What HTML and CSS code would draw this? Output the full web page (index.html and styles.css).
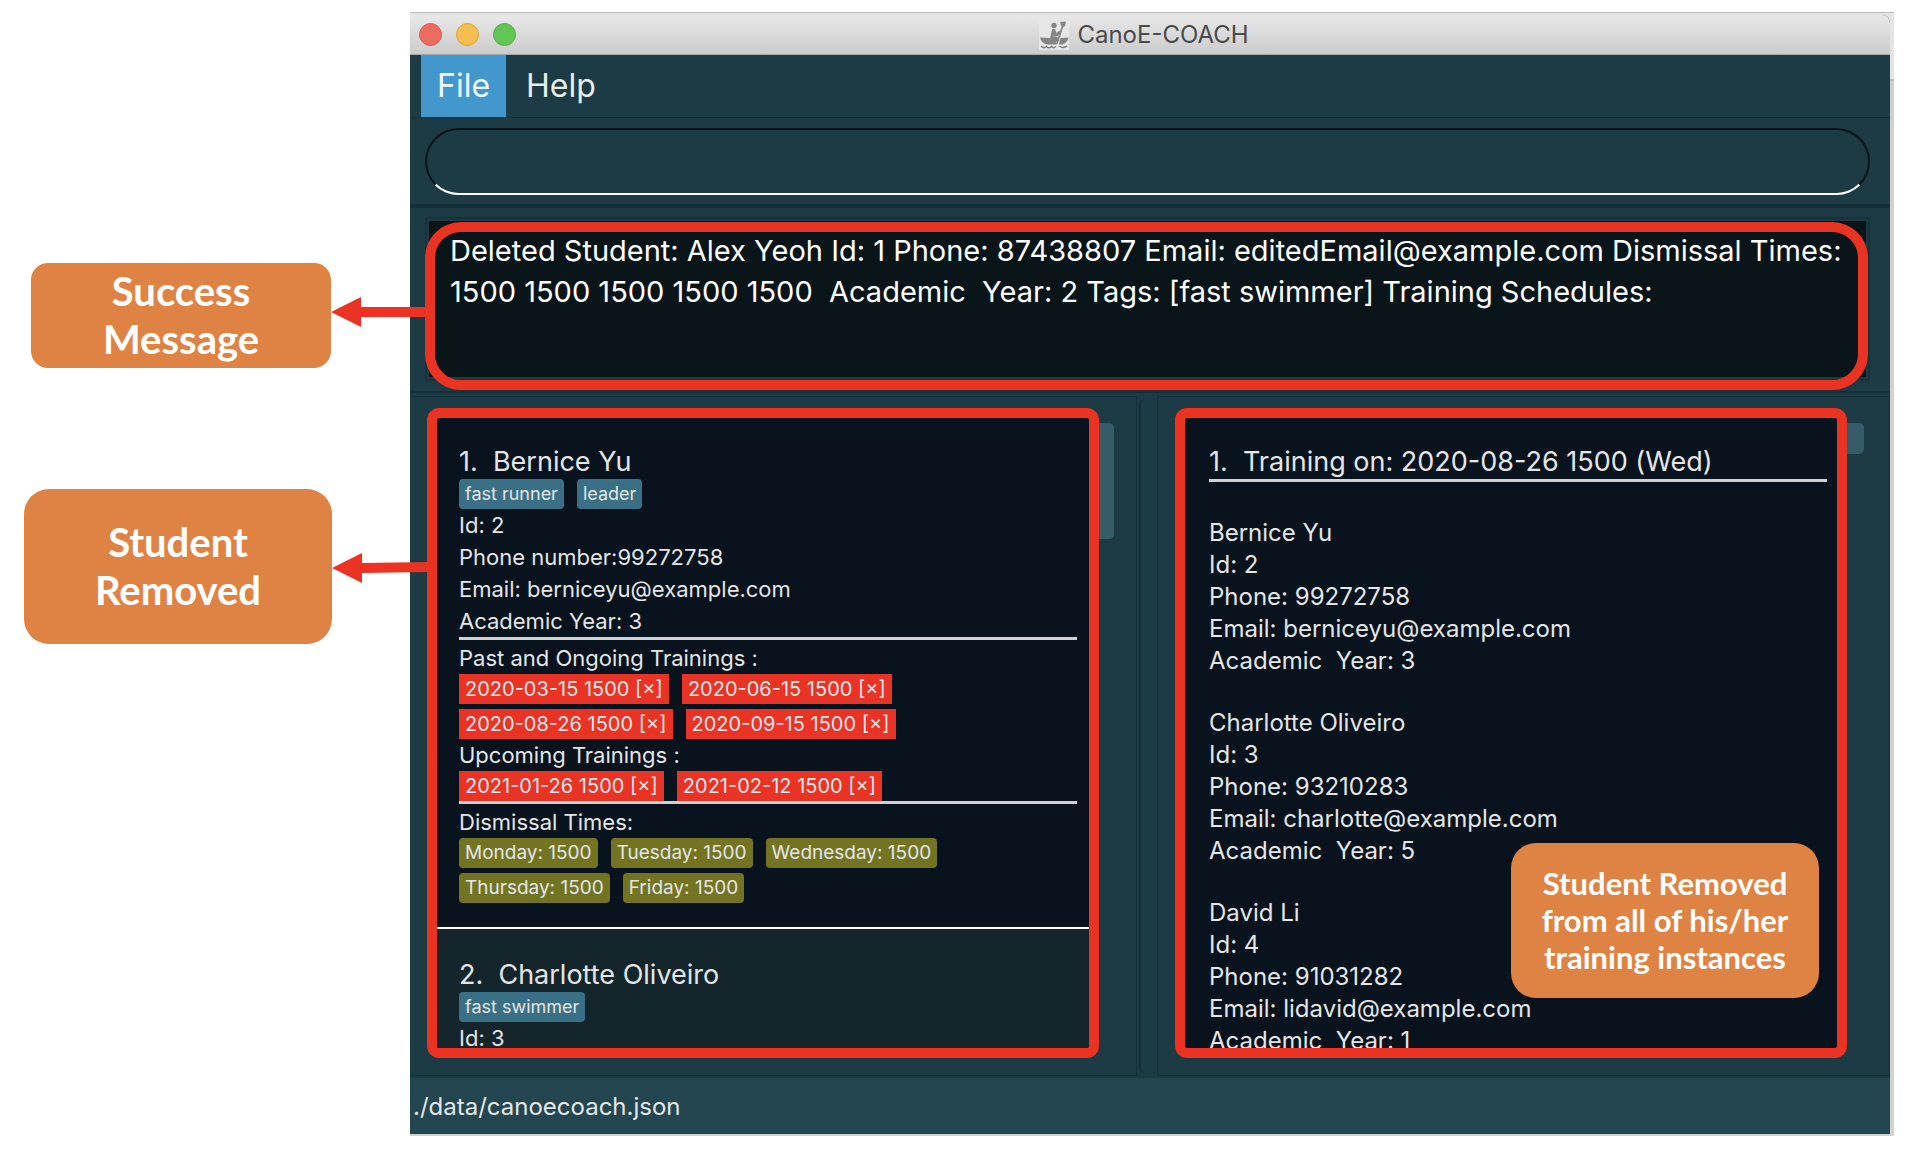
FILE: index.html
```
<!DOCTYPE html>
<html lang="en">
<head>
<meta charset="utf-8">
<title>CanoE-COACH</title>
<link rel="stylesheet" href="styles.css">
</head>
<body>
<div class="page">
  <aside class="notes">
    <div class="callout callout-success">Success<br>Message
      <svg class="arrow" viewBox="0 0 96 30" aria-hidden="true"><path d="M0 15 30 0v10h66v10H30v10z"/></svg>
    </div>
    <div class="callout callout-removed">Student<br>Removed
      <svg class="arrow" viewBox="0 0 96 30" aria-hidden="true"><path d="M0 15 30 0v10l66-1v10l-66 1v10z"/></svg>
    </div>
  </aside>

  <div class="desktop">
    <main class="window">
      <header class="titlebar">
        <div class="lights">
          <button class="light light-close" aria-label="Close"></button>
          <button class="light light-min" aria-label="Minimise"></button>
          <button class="light light-max" aria-label="Zoom"></button>
        </div>
        <div class="title">
          <svg class="logo" viewBox="0 0 30 30" aria-hidden="true">
            <rect width="30" height="30" fill="#e6e6e6"/>
            <g fill="#858585">
              <circle cx="15" cy="5.500" r="2.700"/>
              <path d="M13 9.500q2-1.500 3.500.5l1 4 4-1 .5 2-6 1.500-1.500-1v1l5 .5 1 4H10.500z"/>
              <path d="M1 17.500 10 18q5 1 8 .5l-1 6H8Q2 23 1 17.500z"/>
              <path d="M21.500 18 29.500 17.500Q28.500 23 23 24.500h-3z"/>
              <path d="M21 2 27 1.500 26 6l-2 1.500-5.500 17-1.500-.5L22.500 7z"/>
              <path d="m17 13 4-2.500 2 .5-1 2-4 2.500z"/>
            </g>
            <path d="M2 26q3 3 5.500.5 2.500 2.500 5 0 2 2.500 4.500 0M20.500 26q3 3 7.500 0" fill="none" stroke="#858585" stroke-width="1.600"/>
          </svg>
          <span>CanoE-COACH</span>
        </div>
      </header>

      <nav class="menubar">
        <button class="menu menu-active">File</button>
        <button class="menu">Help</button>
      </nav>

      <form class="command">
        <input class="command-input" type="text" aria-label="Command">
      </form>

      <section class="result">
        <div class="result-frame">
          <p class="result-text">Deleted Student: Alex Yeoh Id: 1 Phone: 87438807 Email: editedEmail@example.com Dismissal Times: 1500 1500 1500 1500 1500  Academic  Year: 2 Tags: [fast swimmer] Training Schedules:</p>
        </div>
      </section>

      <div class="panes">
        <section class="pane">
          <div class="list-wrap">
            <ul class="list">
              <li class="student">
                <h2 class="name">1.&nbsp; Bernice Yu</h2>
                <div class="chips"><span class="chip">fast runner</span><span class="chip">leader</span></div>
                <p>Id: 2</p>
                <p>Phone number:99272758</p>
                <p>Email: berniceyu@example.com</p>
                <p>Academic Year: 3</p>
                <hr class="rule">
                <p>Past and Ongoing Trainings :</p>
                <div class="chips">
                  <span class="chip chip-missed">2020-03-15 1500 [×]</span><span class="chip chip-missed">2020-06-15 1500 [×]</span>
                </div>
                <div class="chips chips-next">
                  <span class="chip chip-missed">2020-08-26 1500 [×]</span><span class="chip chip-missed">2020-09-15 1500 [×]</span>
                </div>
                <p>Upcoming Trainings :</p>
                <div class="chips">
                  <span class="chip chip-missed">2021-01-26 1500 [×]</span><span class="chip chip-missed">2021-02-12 1500 [×]</span>
                </div>
                <hr class="rule">
                <p>Dismissal Times:</p>
                <div class="chips">
                  <span class="chip chip-time">Monday: 1500</span><span class="chip chip-time">Tuesday: 1500</span><span class="chip chip-time">Wednesday: 1500</span>
                </div>
                <div class="chips chips-next">
                  <span class="chip chip-time">Thursday: 1500</span><span class="chip chip-time">Friday: 1500</span>
                </div>
              </li>
              <li class="student student-alt">
                <h2 class="name">2.&nbsp; Charlotte Oliveiro</h2>
                <div class="chips"><span class="chip">fast swimmer</span></div>
                <p>Id: 3</p>
              </li>
            </ul>
            <div class="thumb thumb-students"></div>
          </div>
        </section>
        <div class="divider"></div>
        <section class="pane pane-trainings">
          <div class="list-wrap">
            <ul class="list">
              <li class="training">
                <h2 class="name">1.&nbsp; Training on: 2020-08-26 1500 (Wed)</h2>
                <hr class="rule">
                <div class="attendees">
                  <div>
                    <p>Bernice Yu</p>
                    <p>Id: 2</p>
                    <p>Phone: 99272758</p>
                    <p>Email: berniceyu@example.com</p>
                    <p>Academic&nbsp; Year: 3</p>
                  </div>
                  <div>
                    <p>Charlotte Oliveiro</p>
                    <p>Id: 3</p>
                    <p>Phone: 93210283</p>
                    <p>Email: charlotte@example.com</p>
                    <p>Academic&nbsp; Year: 5</p>
                  </div>
                  <div>
                    <p>David Li</p>
                    <p>Id: 4</p>
                    <p>Phone: 91031282</p>
                    <p>Email: lidavid@example.com</p>
                    <p>Academic&nbsp; Year: 1</p>
                  </div>
                </div>
              </li>
            </ul>
            <div class="thumb thumb-trainings"></div>
            <div class="callout callout-instances">Student Removed<br>from all of his/her<br>training instances</div>
          </div>
        </section>
      </div>

      <footer class="status">./data/canoecoach.json</footer>
    </main>
  </div>
</div>
</body>
</html>
```
FILE: styles.css
```
:root {
  --red: #ea3323;
  --orange: #df8344;
  --teal: #1c3b44;
  --teal-dark: #142f37;
  --black: #09131d;
}

* { box-sizing: border-box; }

body {
  margin: 0;
  background: #fff;
  font-family: Inter, "Liberation Sans", sans-serif;
}

h2, p, ul { margin: 0; padding: 0; font-weight: 400; }
button { border: 0; padding: 0; font: inherit; color: inherit; background: none; }

.page {
  display: grid;
  grid-template-columns: 410px 1fr;
  height: 100vh;
  min-height: 700px;
  padding: 12px 16px 20px 0;
}

/* Annotations */
.notes { padding-top: 251px; }

.callout {
  position: relative;
  background: var(--orange);
  color: #fff;
  font-family: Lato, "Liberation Sans", sans-serif;
  font-weight: 700;
  font-size: 40px;
  line-height: 48px;
  text-align: center;
  border-radius: 25px;
}

.callout-success {
  width: 300px;
  height: 105px;
  margin-left: 31px;
  padding-top: 4px;
  border-radius: 17px;
}

.callout-removed {
  width: 308px;
  height: 155px;
  margin: 121px 0 0 24px;
  padding-top: 29px;
}

.callout-instances {
  position: absolute;
  right: 28px;
  bottom: 60px;
  width: 308px;
  height: 155px;
  padding-top: 22px;
  font-size: 31px;
  line-height: 37px;
}

.arrow {
  position: absolute;
  left: 100%;
  top: 50%;
  width: 96px;
  height: 30px;
  margin-top: -19px;
  fill: var(--red);
  z-index: 1;
}

.callout-removed .arrow { margin-top: -14px; }

/* Window */
.desktop {
  display: flex;
  min-height: 0;
  padding: 2px 4px 2px 0;
  background: linear-gradient(#e4e4e4 66px, #bdbdbd 66px 68px, #cfcfcf 68px 107px, #d3d1d0 107px);
  border-top: 1px solid #bcbcbc;
}

.window {
  flex: 1;
  display: flex;
  flex-direction: column;
  min-width: 0;
  background: var(--teal);
  border-radius: 0 8px 0 0;
  overflow: hidden;
}

.titlebar {
  display: grid;
  grid-template-columns: 1fr auto 1fr;
  align-items: center;
  height: 40px;
  background: linear-gradient(#e8e8e8, #cbcbcb);
  border-bottom: 1px solid #a9a9a9;
}

.lights { display: flex; gap: 14px; padding-left: 9px; }
.light { width: 23px; height: 23px; border-radius: 50%; border: 1px solid #e05b50; background: #ed6b60; }
.light-min { background: #f5be50; border-color: #dfa23c; }
.light-max { background: #62c655; border-color: #50ac42; }

.title {
  display: flex;
  align-items: center;
  gap: 8px;
  padding-right: 12px;
  font-size: 24px;
  line-height: 30px;
  color: #4a4a4a;
}

.logo { width: 30px; height: 30px; }

.menubar {
  display: flex;
  height: 63px;
  padding-left: 11px;
  border-bottom: 1px solid var(--teal-dark);
}

.menu { padding: 0 20px 2px; font-size: 32px; color: #eaeef0; }
.menu-active { padding: 0 16px 2px; background: #4297cc; color: #eef8ff; }

.command {
  padding: 10px 20px 9px 15px;
  border-bottom: 4px solid var(--teal-dark);
}

.command-input {
  display: block;
  width: 100%;
  height: 67px;
  padding: 0 30px;
  border: 2px solid #09141a;
  border-bottom-color: #fff;
  border-radius: 34px;
  background: transparent;
  color: #fff;
  font: inherit;
  font-size: 29px;
  outline: 0;
}

.result {
  padding: 9px 20px 10px 15px;
  border-bottom: 2px solid var(--teal-dark);
}

.result-frame {
  position: relative;
  padding: 2px;
  border: 2px solid #17323b;
}

.result-frame::after {
  content: "";
  position: absolute;
  inset: 3px 0 -11px -2px;
  border: 10px solid var(--red);
  border-radius: 36px;
}

.result-text {
  height: 156px;
  padding: 9px 8px 0 21px;
  background: #0a151a;
  color: #fff;
  font-size: 29px;
  line-height: 41px;
  white-space: pre-wrap;
}

/* Lists */
.panes {
  flex: 1;
  display: grid;
  grid-template-columns: 727fr 20px 733fr;
  min-height: 0;
  padding: 3px 0 2px;
}

.pane {
  display: flex;
  min-height: 0;
  min-width: 0;
  padding: 11px 37px 17px 17px;
  border: 1px solid var(--teal-dark);
  border-left: 0;
}

.pane-trainings {
  padding: 11px 42px 17px 17px;
  border-left: 1px solid var(--teal-dark);
}

.divider {
  margin: 3px 2px;
  border-left: 2px solid var(--teal-dark);
  border-radius: 6px;
}

.list-wrap { position: relative; display: flex; flex: 1; min-width: 0; }

.list {
  flex: 1;
  min-width: 0;
  overflow: hidden;
  list-style: none;
  border: 10px solid var(--red);
  border-radius: 12px;
  background: var(--black);
  color: #e4e6e8;
}

.thumb {
  position: absolute;
  left: 100%;
  top: 15px;
  width: 15px;
  background: #365c67;
  border-radius: 0 5px 5px 0;
}

.thumb-students { height: 116px; }
.thumb-trainings { width: 17px; height: 31px; }

.student {
  padding: 26px 12px 24px 22px;
  font-size: 22px;
  line-height: 32px;
  border-bottom: 2px solid #fff;
}

.student-alt { padding-top: 28px; background: #14262c; }

.name { font-size: 27px; line-height: 35px; }

.chips { display: flex; gap: 13px; }
.chips-next { margin-top: 5px; }

.chip {
  padding: 0 6px;
  font-size: 18px;
  line-height: 30px;
  border-radius: 4px;
  background: #3a7085;
}

.chip-missed { border-radius: 0; background: #e93325; font-size: 20px; }
.chip-time { background: #737422; font-size: 19px; }

.rule {
  height: 3px;
  margin: 0 0 2px;
  border: 0;
  background: #cfd1d2;
}

.training { padding: 26px 10px 0 24px; font-size: 24px; line-height: 32px; }
.attendees { display: grid; gap: 30px; padding-top: 33px; }

.status {
  height: 56px;
  padding: 0 3px;
  background: #234650;
  color: #e4e8ea;
  font-size: 24px;
  line-height: 58px;
}
```
